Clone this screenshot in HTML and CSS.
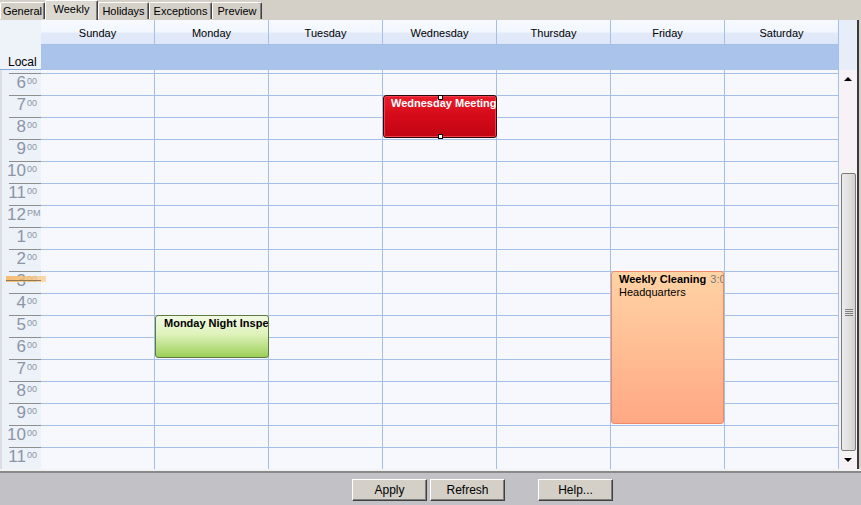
FILE: index.html
```html
<!DOCTYPE html>
<html>
<head>
<meta charset="utf-8">
<link rel="stylesheet" href="styles.css">
</head>
<body>
<div class="tabs">
  <div class="tab t-general">General</div>
  <div class="tab t-weekly active">Weekly</div>
  <div class="tab t-holidays">Holidays</div>
  <div class="tab t-exceptions">Exceptions</div>
  <div class="tab t-preview">Preview</div>
</div>
<div class="frame">
  <div class="top">
    <div class="corner"><span>Local</span></div>
    <div class="days">
      <div class="dayhead">
        <div>Sunday</div><div>Monday</div><div>Tuesday</div><div>Wednesday</div><div>Thursday</div><div>Friday</div><div>Saturday</div>
      </div>
      <div class="allday"></div>
    </div>
    <div class="topspacer"></div>
  </div>
  <div class="bodywrap">
    <div class="timecol">
      <div class="hour"><span class="h">6</span><span class="m">00</span></div>
      <div class="hour"><span class="h">7</span><span class="m">00</span></div>
      <div class="hour"><span class="h">8</span><span class="m">00</span></div>
      <div class="hour"><span class="h">9</span><span class="m">00</span></div>
      <div class="hour"><span class="h">10</span><span class="m">00</span></div>
      <div class="hour"><span class="h">11</span><span class="m">00</span></div>
      <div class="hour"><span class="h">12</span><span class="m">PM</span></div>
      <div class="hour"><span class="h">1</span><span class="m">00</span></div>
      <div class="hour"><span class="h">2</span><span class="m">00</span></div>
      <div class="hour"><span class="h">3</span><span class="m">00</span></div>
      <div class="hour"><span class="h">4</span><span class="m">00</span></div>
      <div class="hour"><span class="h">5</span><span class="m">00</span></div>
      <div class="hour"><span class="h">6</span><span class="m">00</span></div>
      <div class="hour"><span class="h">7</span><span class="m">00</span></div>
      <div class="hour"><span class="h">8</span><span class="m">00</span></div>
      <div class="hour"><span class="h">9</span><span class="m">00</span></div>
      <div class="hour"><span class="h">10</span><span class="m">00</span></div>
      <div class="hour"><span class="h">11</span><span class="m">00</span></div>
    </div>
    <div class="cols">
      <div class="col"><div class="r"></div><div class="r"></div><div class="r"></div><div class="r"></div><div class="r"></div><div class="r"></div><div class="r"></div><div class="r"></div><div class="r"></div><div class="r"></div><div class="r"></div><div class="r"></div><div class="r"></div><div class="r"></div><div class="r"></div><div class="r"></div><div class="r"></div><div class="r"></div></div>
      <div class="col"><div class="r"></div><div class="r"></div><div class="r"></div><div class="r"></div><div class="r"></div><div class="r"></div><div class="r"></div><div class="r"></div><div class="r"></div><div class="r"></div><div class="r"></div><div class="r"></div><div class="r"></div><div class="r"></div><div class="r"></div><div class="r"></div><div class="r"></div><div class="r"></div>
        <div class="ev ev-green">Monday Night Inspection</div>
      </div>
      <div class="col"><div class="r"></div><div class="r"></div><div class="r"></div><div class="r"></div><div class="r"></div><div class="r"></div><div class="r"></div><div class="r"></div><div class="r"></div><div class="r"></div><div class="r"></div><div class="r"></div><div class="r"></div><div class="r"></div><div class="r"></div><div class="r"></div><div class="r"></div><div class="r"></div></div>
      <div class="col"><div class="r"></div><div class="r"></div><div class="r"></div><div class="r"></div><div class="r"></div><div class="r"></div><div class="r"></div><div class="r"></div><div class="r"></div><div class="r"></div><div class="r"></div><div class="r"></div><div class="r"></div><div class="r"></div><div class="r"></div><div class="r"></div><div class="r"></div><div class="r"></div>
        <div class="ev ev-red">Wednesday Meeting</div>
        <div class="handle handle-top"></div>
        <div class="handle handle-bottom"></div>
      </div>
      <div class="col"><div class="r"></div><div class="r"></div><div class="r"></div><div class="r"></div><div class="r"></div><div class="r"></div><div class="r"></div><div class="r"></div><div class="r"></div><div class="r"></div><div class="r"></div><div class="r"></div><div class="r"></div><div class="r"></div><div class="r"></div><div class="r"></div><div class="r"></div><div class="r"></div></div>
      <div class="col"><div class="r"></div><div class="r"></div><div class="r"></div><div class="r"></div><div class="r"></div><div class="r"></div><div class="r"></div><div class="r"></div><div class="r"></div><div class="r"></div><div class="r"></div><div class="r"></div><div class="r"></div><div class="r"></div><div class="r"></div><div class="r"></div><div class="r"></div><div class="r"></div>
        <div class="ev ev-peach"><b>Weekly Cleaning</b> <span class="time">3:00 PM</span><br>Headquarters</div>
      </div>
      <div class="col"><div class="r"></div><div class="r"></div><div class="r"></div><div class="r"></div><div class="r"></div><div class="r"></div><div class="r"></div><div class="r"></div><div class="r"></div><div class="r"></div><div class="r"></div><div class="r"></div><div class="r"></div><div class="r"></div><div class="r"></div><div class="r"></div><div class="r"></div><div class="r"></div></div>
    </div>
    <div class="sb">
      <div class="sb-btn"><span class="arrow-up"></span></div>
      <div class="sb-gap"></div>
      <div class="thumb"><span class="grip"></span></div>
      <div class="sb-btn sb-down"><span class="arrow-down"></span></div>
    </div>
    <div class="now"></div>
  </div>
</div>
<div class="footer">
  <button class="btn">Apply</button>
  <button class="btn btn-refresh">Refresh</button>
  <button class="btn btn-help">Help...</button>
</div>
</body>
</html>
```
FILE: styles.css
```css
* { box-sizing: border-box; margin: 0; padding: 0; }
body {
  width: 861px; height: 505px; overflow: hidden;
  background: #d4d0c8;
  font-family: "Liberation Sans", Arial, sans-serif;
  font-size: 11px; color: #000;
}
.tabs { height: 20px; display: flex; align-items: flex-start; }
.tab {
  height: 17px; margin-top: 2px;
  border-top: 1px solid #fff; border-left: 1px solid #fff;
  border-right: 1px solid #404040;
  box-shadow: inset -1px 0 #808080;
  border-radius: 2px 2px 0 0;
  display: flex; align-items: center; justify-content: center;
  font-size: 11px; background: #d4d0c8; white-space: nowrap;
}
.tab.active { height: 20px; margin-top: 0; align-items: flex-start; padding-top: 2px; background: #dcd9d2; }
.t-general { width: 45px; }
.t-weekly { width: 53px; }
.t-holidays { width: 51px; }
.t-exceptions { width: 63px; }
.t-preview { width: 50px; }

.frame { width: 859px; height: 449px; border-right: 2px solid #3a3a3a; background: #f6f8fd; }
.top { display: flex; height: 50px; }
.corner {
  width: 41px; background: #eef2f9;
  border-bottom: 1px solid #86a8dc;
  display: flex; align-items: flex-end;
  padding: 0 0 0 8px; font-size: 12px; line-height: 14px;
}
.days { width: 798px; display: flex; flex-direction: column; }
.dayhead { display: flex; height: 25px; border-bottom: 1px solid #a5bfe6; }
.dayhead div {
  width: 114px; border-right: 1px solid #a5bfe6;
  background: linear-gradient(#f8faff 0, #f2f6fe 50%, #e2eaf9 54%, #dee7f9 100%);
  display: flex; align-items: center; justify-content: center;
  font-size: 11px; padding-top: 1px;
}
.allday { height: 25px; background: #a9c3ea; border-right: 1px solid #a5bfe6; }
.topspacer { width: 18px; background: #e8eef9; }

.bodywrap { display: flex; height: 399px; position: relative; overflow: hidden; }
.timecol { width: 41px; background: #edf1f8; padding-top: 3px; border-left: 2px solid #dcdde2; }
.hour {
  height: 22px; border-top: 1px solid #8e8e8e;
  margin-left: 7px; display: flex; justify-content: flex-end;
  padding-right: 4px; color: #8b95a6;
}
.hour .h { font-size: 17px; line-height: 20px; margin-top: -1px; }
.hour .m { font-size: 9px; line-height: 9px; margin-top: 3px; margin-left: 1px; width: 10px; }
.cols { display: flex; }
.col { width: 114px; border-right: 1px solid #a5bfe6; padding-top: 3px; position: relative; }
.r { height: 22px; border-top: 1px solid #a5bfe6; }

.ev {
  position: absolute; left: 0; width: 114px;
  border-radius: 3px; padding: 0 0 0 7px;
  font-weight: bold; overflow: hidden; white-space: nowrap;
  font-size: 11px; line-height: 13px;
}
.ev-red {
  top: 25px; height: 43px; border: 1px solid #2c0a0a; color: #fff;
  background: linear-gradient(#ea1c2a, #d40a19 50%, #c20412);
  box-shadow: inset 0 0 0 1px #f04050;
  padding-top: 1px;
}
.ev-green {
  top: 245px; height: 43px; border: 1px solid #5d7a45; padding-left: 8px; padding-top: 1px;
  background: linear-gradient(#f2fae2, #def2ba 45%, #9ccf58);
}
.ev-peach {
  top: 201px; height: 153px; border: 1px solid #f0896a; font-weight: normal; padding-top: 1px;
  background: linear-gradient(#ffd3a4, #ffa884);
  width: 113px;
}
.ev-peach .time { color: #7a7a7a; margin-left: 1px; }
.handle { position: absolute; left: 55px; width: 5px; height: 5px; background: #fff; border: 1px solid #000; }
.handle-top { top: 25px; }
.handle-bottom { top: 64px; }

.now {
  position: absolute; left: 6px; top: 206px; width: 40px; height: 6px;
  background: linear-gradient(90deg, rgba(246,178,90,.85), rgba(250,205,140,.7));
}
.now::after {
  content: ""; position: absolute; left: 0; top: 4px; width: 35px; height: 1px; background: #8f7a5a;
}

.sb { width: 18px; background: #f7f2f5; display: flex; flex-direction: column; }
.sb-btn { height: 17px; display: flex; align-items: center; justify-content: center; }
.sb-down { flex: 1; }
.arrow-up { width: 0; height: 0; border-left: 4px solid transparent; border-right: 4px solid transparent; border-bottom: 4px solid #000; }
.arrow-down { width: 0; height: 0; border-left: 4px solid transparent; border-right: 4px solid transparent; border-top: 4px solid #000; }
.sb-gap { height: 86px; }
.thumb {
  height: 278px; margin: 0 1px 0 2px;
  border: 1px solid #7b7b7b; border-radius: 2px;
  background: linear-gradient(90deg, #ececec, #dedede 60%, #d2d2d2);
  display: flex; align-items: center; justify-content: center;
}
.grip {
  width: 8px; height: 7px;
  background: repeating-linear-gradient(#808080 0 1px, transparent 1px 2px);
}

.footer {
  height: 36px; display: flex; padding: 10px 0 0 352px;
  background: linear-gradient(#f2f2f2 0 2px, #8a8a8a 2px 4px, #c2c1c5 4px);
}
.btn {
  width: 75px; height: 22px;
  background: #d4d0c8;
  border: 1px solid; border-color: #fff #404040 #404040 #fff;
  box-shadow: inset -1px -1px #808080;
  font-family: "Liberation Sans", Arial, sans-serif; font-size: 12px; color: #000;
}
.btn-refresh { margin-left: 3px; }
.btn-help { margin-left: 33px; }
```
